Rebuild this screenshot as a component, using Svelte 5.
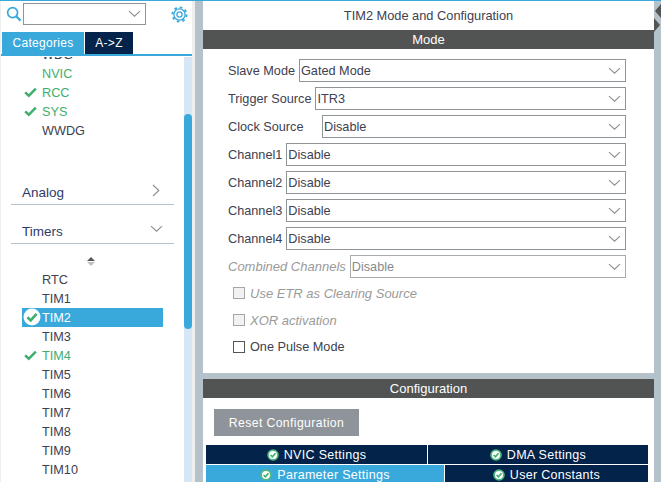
<script>
  const selects = [
    { label: 'Slave Mode', value: 'Gated Mode' },
    { label: 'Trigger Source', value: 'ITR3' },
    { label: 'Clock Source', value: 'Disable', wide: true },
    { label: 'Channel1', value: 'Disable' },
    { label: 'Channel2', value: 'Disable' },
    { label: 'Channel3', value: 'Disable' },
    { label: 'Channel4', value: 'Disable' },
    { label: 'Combined Channels', value: 'Disable', off: true }
  ];

  const checks = [
    { label: 'Use ETR as Clearing Source', off: true },
    { label: 'XOR activation', off: true },
    { label: 'One Pulse Mode' }
  ];

  const system = [
    { name: 'WDG' },
    { name: 'NVIC', on: true },
    { name: 'RCC', on: true, tick: true },
    { name: 'SYS', on: true, tick: true },
    { name: 'WWDG' }
  ];

  const timers = [
    { name: 'RTC' },
    { name: 'TIM1' },
    { name: 'TIM2', selected: true },
    { name: 'TIM3' },
    { name: 'TIM4', on: true, tick: true },
    { name: 'TIM5' },
    { name: 'TIM6' },
    { name: 'TIM7' },
    { name: 'TIM8' },
    { name: 'TIM9' },
    { name: 'TIM10' }
  ];
</script>

{#snippet chevronDown()}
  <svg class="chev" width="13" height="8" viewBox="0 0 13 8"><path d="M1 1.2 L6.5 6.2 L12 1.2" fill="none" stroke="#8a8f92" stroke-width="1.1" /></svg>
{/snippet}

{#snippet okBadge()}
  <svg class="ok" width="12" height="12" viewBox="0 0 12 12"><circle cx="6" cy="6" r="5.8" fill="#4fb97f" /><circle cx="6" cy="6" r="4" fill="#ffffff" /><path d="M3.6 6 L5.4 7.8 L8.5 4.3" fill="none" stroke="#3fae6e" stroke-width="1.7" /></svg>
{/snippet}

{#snippet row(item)}
  <div class="item" class:on={item.on} class:selected={item.selected}>
    {#if item.selected}
      <svg class="bigok" width="18" height="18" viewBox="0 0 18 18"><circle cx="9" cy="9" r="8.5" fill="#ffffff" /><path d="M4.4 9.2 L7.7 12.4 L13.6 5.8" fill="none" stroke="#3fae6e" stroke-width="2.6" /></svg>
    {:else if item.tick}
      <svg class="tick" width="13" height="11" viewBox="0 0 13 11"><path d="M1.2 5.4 L4.8 8.8 L11.8 1.6" fill="none" stroke="#3fae6e" stroke-width="2.6" /></svg>
    {/if}
    <span>{item.name}</span>
  </div>
{/snippet}

<div class="window">
  <aside class="side">
    <div class="search">
      <svg width="16" height="16" viewBox="0 0 16 16"><circle cx="6.6" cy="6.6" r="5" fill="none" stroke="#39a9dc" stroke-width="1.7" /><path d="M10.2 10.2 L14.6 14.6" stroke="#39a9dc" stroke-width="2.2" /></svg>
      <div class="combo">{@render chevronDown()}</div>
      <svg class="gear" width="17" height="17" viewBox="0 0 17 17">
        <g fill="none" stroke="#39a9dc">
          <circle cx="8.5" cy="8.5" r="2.6" stroke-width="1.3" />
          <circle cx="8.5" cy="8.5" r="5.6" stroke-width="1.3" />
          <circle cx="8.5" cy="8.5" r="7.1" stroke-width="1.9" stroke-dasharray="2.6 2.98" />
        </g>
      </svg>
    </div>
    <div class="tabs">
      <div class="tab active">Categories</div>
      <div class="tab">A-&gt;Z</div>
    </div>
    <div class="tree">
      <div class="content">
        <div class="list first">
          {#each system as item}
            {@render row(item)}
          {/each}
        </div>
        <div class="group analog">
          <span>Analog</span>
          <svg width="8" height="13" viewBox="0 0 8 13"><path d="M1 1 L6.8 6.5 L1 12" fill="none" stroke="#8a8f92" stroke-width="1.1" /></svg>
        </div>
        <div class="group timers">
          <span>Timers</span>
          {@render chevronDown()}
        </div>
        <div class="sort">
          <i class="up"></i>
          <i class="down"></i>
        </div>
        <div class="list">
          {#each timers as item}
            {@render row(item)}
          {/each}
        </div>
      </div>
      <div class="track"><div class="thumb"></div></div>
    </div>
  </aside>

  <main class="main">
    <div class="title">TIM2 Mode and Configuration</div>
    <div class="head">Mode</div>
    <section class="form">
      {#each selects as s}
        <div class="field" class:off={s.off}>
          <span class="label" class:wide={s.wide}>{s.label}</span>
          <div class="select">
            <span>{s.value}</span>
            {@render chevronDown()}
          </div>
        </div>
      {/each}
      <div class="checks">
        {#each checks as c}
          <div class="check" class:off={c.off}>
            <i class="box"></i>
            <span>{c.label}</span>
          </div>
        {/each}
      </div>
    </section>
    <section class="config">
      <div class="head">Configuration</div>
      <button class="reset">Reset Configuration</button>
      <div class="cfg-row top">
        <div class="cfg nvic">{@render okBadge()}NVIC Settings</div>
        <div class="cfg dma">{@render okBadge()}DMA Settings</div>
      </div>
      <div class="cfg-row">
        <div class="cfg param">{@render okBadge()}Parameter Settings</div>
        <div class="cfg user">{@render okBadge()}User Constants</div>
      </div>
    </section>
  </main>

  <div class="edge">
    <i class="arrow left"></i>
    <i class="arrow right"></i>
  </div>
</div>

<style>
  :global(body) {
    margin: 0;
    overflow: hidden;
  }

  .window {
    display: flex;
    width: 661px;
    height: 482px;
    overflow: hidden;
    background: #b5c2c9;
    border-top: 1px solid #39a9dc;
    box-sizing: border-box;
    font-family: 'Liberation Sans', Arial, sans-serif;
    font-size: 12.7px;
    color: #3d4150;
  }

  .side {
    display: flex;
    flex-direction: column;
    width: 195px;
    flex: none;
    background: #ffffff;
    border-right: 3px solid #eeeeee;
    border-left: 1px solid #eeeeee;
    box-sizing: border-box;
  }

  .search {
    display: flex;
    align-items: center;
    height: 26px;
    padding-left: 5px;
    flex: none;
  }

  .combo {
    display: flex;
    align-items: center;
    justify-content: flex-end;
    width: 123px;
    height: 22px;
    margin-left: 1px;
    padding-right: 4px;
    border: 1px solid #8f9496;
    box-sizing: border-box;
  }

  .gear {
    margin-left: 25px;
  }

  .tabs {
    display: flex;
    gap: 1px;
    height: 22px;
    margin-top: 5px;
    padding-left: 1px;
    border-bottom: 2px solid #39a9dc;
    flex: none;
    box-sizing: content-box;
  }

  .tab {
    display: flex;
    align-items: center;
    justify-content: center;
    width: 48px;
    background: #03234b;
    color: #ffffff;
    font-size: 12px;
    letter-spacing: 0.3px;
  }

  .tab.active {
    width: 82px;
    background: #39a9dc;
  }

  .tree {
    position: relative;
    flex: 1;
    min-height: 0;
    overflow: hidden;
    margin-top: 1px;
  }

  .content {
    width: 183px;
    margin-top: -12px;
  }

  .item {
    position: relative;
    display: flex;
    align-items: center;
    height: 19px;
    margin-left: 21px;
    margin-right: 21px;
    padding-left: 20px;
    color: #3d4150;
  }

  .item.on {
    color: #3fae6e;
  }

  .item.selected {
    background: #39a9dc;
    color: #ffffff;
  }

  .tick {
    position: absolute;
    left: 2px;
    top: 4px;
  }

  .bigok {
    position: absolute;
    left: 1px;
    top: 0;
  }

  .group {
    display: flex;
    align-items: center;
    justify-content: space-between;
    height: 24px;
    margin: 0 10px;
    padding: 0 11px;
    border-bottom: 1px solid #b5c2c9;
    color: #2f3a6b;
    font-size: 13.5px;
  }

  .group svg {
    transform: translateY(-2px);
  }

  .analog {
    margin-top: 40px;
    padding-right: 14px;
  }

  .timers {
    margin-top: 14px;
  }

  .sort {
    display: flex;
    flex-direction: column;
    align-items: center;
    gap: 1px;
    width: 180px;
    height: 8px;
    padding-top: 13px;
    margin-bottom: 5px;
  }

  .sort i {
    width: 0;
    height: 0;
    border-left: 4px solid transparent;
    border-right: 4px solid transparent;
  }

  .up {
    border-bottom: 4px solid #55585a;
  }

  .down {
    border-top: 4px solid #bfc3c5;
  }

  .track {
    position: absolute;
    top: 0;
    right: 0;
    width: 8px;
    height: 100%;
    background: #d6e6f4;
  }

  .thumb {
    height: 215px;
    margin-top: 57px;
    background: #39a9dc;
    border-radius: 4px;
  }

  .main {
    display: flex;
    flex-direction: column;
    width: 451px;
    margin-left: 8px;
    flex: none;
  }

  .title {
    display: flex;
    align-items: center;
    justify-content: center;
    height: 29px;
    background: #ffffff;
    color: #3d4150;
    font-size: 12.8px;
    flex: none;
  }

  .head {
    display: flex;
    align-items: center;
    justify-content: center;
    height: 19px;
    background: #525453;
    color: #ffffff;
    font-size: 13px;
    flex: none;
  }

  .form {
    height: 324px;
    padding: 10px 28px 0 25px;
    background: #ffffff;
    box-sizing: border-box;
    flex: none;
  }

  .field {
    display: flex;
    align-items: center;
    gap: 4px;
    height: 23px;
    margin-bottom: 5px;
  }

  .label {
    white-space: nowrap;
  }

  .label.wide {
    width: 90px;
    flex: none;
  }

  .select {
    display: flex;
    flex: 1;
    align-items: center;
    justify-content: space-between;
    height: 23px;
    padding: 0 4px 0 1px;
    border: 1px solid #8f9496;
    box-sizing: border-box;
  }

  .field.off .label {
    color: #9a9a9a;
    font-style: italic;
    font-size: 13px;
  }

  .field.off .select {
    color: #8a8a8a;
    border-color: #a8abad;
  }

  .checks {
    display: flex;
    flex-direction: column;
    gap: 9px;
    margin-top: 6px;
    padding-left: 5px;
  }

  .check {
    display: flex;
    align-items: center;
    gap: 5px;
    height: 18px;
  }

  .box {
    display: block;
    width: 12px;
    height: 12px;
    background: #ffffff;
    border: 1px solid #555555;
    box-sizing: border-box;
  }

  .check.off {
    color: #9a9a9a;
    font-style: italic;
    font-size: 13px;
  }

  .check.off .box {
    background: #f2f2f2;
    border-color: #a6a6a6;
  }

  .config {
    margin-top: 6px;
    background: #ffffff;
    flex: 1;
  }

  .reset {
    display: block;
    width: 145px;
    height: 27px;
    margin: 11px 0 9px 11px;
    padding: 0;
    background: #8e9499;
    border: none;
    color: #ffffff;
    font: inherit;
    font-size: 12.2px;
    letter-spacing: 0.4px;
  }

  .cfg-row {
    display: flex;
    gap: 1px;
    width: 442px;
    margin-left: 3px;
  }

  .cfg-row.top {
    margin-bottom: 1px;
  }

  .cfg {
    display: flex;
    align-items: center;
    justify-content: center;
    gap: 5px;
    height: 19px;
    background: #03234b;
    color: #ffffff;
    letter-spacing: 0.3px;
    font-size: 12.5px;
  }

  .nvic {
    width: 221px;
  }

  .dma {
    width: 220px;
  }

  .param {
    width: 238px;
    background: #39a9dc;
  }

  .user {
    width: 203px;
  }

  .edge {
    position: relative;
    flex: 1;
  }

  .arrow {
    position: absolute;
    width: 0;
    height: 0;
    border-top: 7px solid transparent;
    border-bottom: 7px solid transparent;
  }

  .arrow.left {
    top: 3px;
    right: 0;
    border-right: 6px solid #555555;
  }

  .arrow.right {
    top: 17px;
    left: 0;
    border-left: 6px solid #555555;
  }
</style>
